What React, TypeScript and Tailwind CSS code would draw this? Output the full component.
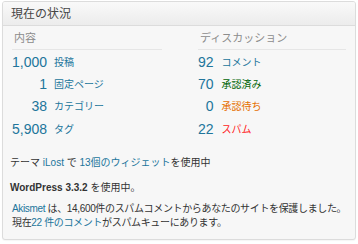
import React from "react";

const font = { fontFamily: '"Liberation Sans", "Noto Sans CJK JP", sans-serif' };

type Row = { n: string; label: string; color: string };

const left: Row[] = [
  { n: "1,000", label: "投稿", color: "text-[#21759b]" },
  { n: "1", label: "固定ページ", color: "text-[#21759b]" },
  { n: "38", label: "カテゴリー", color: "text-[#21759b]" },
  { n: "5,908", label: "タグ", color: "text-[#21759b]" },
];

const right: Row[] = [
  { n: "92", label: "コメント", color: "text-[#21759b]" },
  { n: "70", label: "承認済み", color: "text-[#006505]" },
  { n: "0", label: "承認待ち", color: "text-[#e66f00]" },
  { n: "22", label: "スパム", color: "text-[#ff1a1a]" },
];

function Table({ title, rows, width, gap }: { title: string; rows: Row[]; width: string; gap: string }) {
  return (
    <div className={width}>
      <div className="h-[13px] pl-[2px] text-[11px] leading-[13px] text-[#8c8c8c]">{title}</div>
      <div className="mt-[4px] border-t border-[#e6e6e6] pt-[1px]">
        <div className="grid grid-cols-[auto_1fr]">
          {rows.map((r) => (
            <React.Fragment key={r.label}>
              <div className="flex h-[22.4px] items-center justify-end text-[14px] text-[#21759b]">{r.n}</div>
              <div className={`flex h-[22.4px] items-center ${gap} text-[10px] ${r.color}`}>{r.label}</div>
            </React.Fragment>
          ))}
        </div>
      </div>
    </div>
  );
}

export default function App() {
  return (
    <div className="h-[244px] w-[358px] bg-white pt-[1px] pl-[2px]" style={font}>
      <div className="h-[239px] w-[354px] overflow-hidden rounded-[3px] border border-[#dcdcdc] bg-[#f7f7f7] shadow-[0_1px_1px_rgba(0,0,0,0.04)]">
        <div className="flex h-[24px] items-center border-b border-[#dcdcdc] bg-gradient-to-b from-[#f9f9f9] to-[#ececec] pl-[8px] text-[12px] text-[#464646]">
          現在の状況
        </div>
        <div className="px-[8px] pt-[6px]">
          <div className="flex justify-between pr-[1px]">
            <Table title="内容" rows={left} width="w-[151px] pl-[1px]" gap="pl-[7px]" />
            <Table title="ディスカッション" rows={right} width="w-[148px]" gap="pl-[8px]" />
          </div>
          <div className="-ml-[1px] text-[10px] leading-[14px] text-[#333]">
            <p className="mt-[15px] whitespace-nowrap">
              テーマ <span className="text-[#21759b]">iLost</span> で <span className="text-[#21759b]">13個のウィジェット</span>を使用中
            </p>
            <p className="mt-[11px] whitespace-nowrap">
              <span className="font-bold">WordPress 3.3.2</span> を使用中。
            </p>
            <p className="mt-[7px] whitespace-nowrap pl-[2px] tracking-[-0.35px]">
              <span className="text-[#21759b]">Akismet</span> は、14,600件のスパムコメントからあなたのサイトを保護しました。
              <br />
              現在<span className="text-[#21759b]">22 件のコメント</span>がスパムキューにあります。
            </p>
          </div>
        </div>
      </div>
    </div>
  );
}
